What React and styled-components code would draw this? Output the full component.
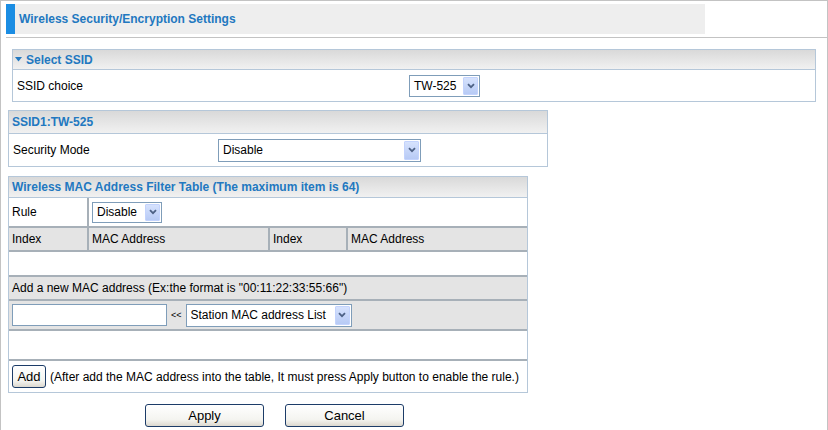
import React from "react";
import styled, { createGlobalStyle } from "styled-components";

const blue = "#2278c0";
const panelLine = "#b5c7d9";
const rowLine = "#a7b0b8";
const grayRow = "#e4e4e4";

const GlobalStyle = createGlobalStyle`
  body {
    margin: 0;
    background: #fff;
    font-family: "Liberation Sans", Arial, sans-serif;
    font-size: 12px;
    color: #000;
  }
`;

const Page = styled.div`
  width: 828px;
  min-height: 470px;
  box-sizing: border-box;
  border: 1px solid #c3c3c3;
  border-bottom: none;
`;

const TitleArea = styled.div`
  margin-left: 5px;
  padding: 3px 0 3px;
  border-bottom: 1px solid #c3c3c3;
`;

const TitleBox = styled.div`
  width: 686px;
  height: 30px;
  background: #eeeeee;
  border-left: 9px solid #1b8de3;
  padding-left: 4px;
  line-height: 30px;
  font-weight: bold;
  color: ${blue};
`;

const Content = styled.div`
  display: flex;
  flex-direction: column;
  align-items: flex-start;
`;

const Panel = styled.div`
  width: ${(p) => p.$w}px;
  margin: ${(p) => p.$top}px 0 0 ${(p) => p.$left}px;
  box-sizing: border-box;
  border: 1px solid ${panelLine};
`;

const PanelHead = styled.div`
  height: ${(p) => p.$h}px;
  display: flex;
  align-items: center;
  gap: 4px;
  padding-left: ${(p) => p.$pad}px;
  background: linear-gradient(#d9d9d9, #f1f1f1);
  border-bottom: 1px solid ${panelLine};
  font-weight: bold;
  color: ${blue};
`;

const FieldRow = styled.div`
  display: grid;
  grid-template-columns: ${(p) => p.$label}px 1fr;
  align-items: center;
  height: ${(p) => p.$h}px;
  background: #fff;
`;

const Cell = styled.div`
  height: 100%;
  display: flex;
  align-items: center;
  padding-left: ${(p) => p.$pad ?? 3}px;
  box-sizing: border-box;
  border-right: ${(p) => (p.$divider ? `2px solid ${rowLine}` : "none")};
  white-space: nowrap;
`;

const TableRow = styled.div`
  display: ${(p) => (p.$cols ? "grid" : "flex")};
  grid-template-columns: ${(p) => p.$cols || "none"};
  align-items: center;
  height: ${(p) => p.$h}px;
  padding-left: ${(p) => (p.$cols ? 0 : 3)}px;
  background: ${(p) => (p.$gray ? grayRow : "#fff")};
  border-top: ${(p) => (p.$first ? "none" : `2px solid ${rowLine}`)};
  white-space: nowrap;
`;

const ComboBox = styled.div`
  display: inline-flex;
  width: ${(p) => p.$w}px;
  height: ${(p) => p.$h}px;
  box-sizing: border-box;
  border: 1px solid #7f9db9;
  background: #fff;
  font-size: 12px;
`;

const ComboText = styled.span`
  flex: 1;
  display: flex;
  align-items: center;
  padding-left: 4px;
`;

const ComboArrow = styled.span`
  width: 15px;
  margin: 1px;
  box-sizing: border-box;
  display: flex;
  align-items: center;
  justify-content: center;
  border: 1px solid #c3d3fd;
  border-radius: 1px;
  background: linear-gradient(#d6e2fd, #b7caf5);
`;

const TextInput = styled.input`
  width: 155px;
  height: 22px;
  box-sizing: border-box;
  border: 1px solid #7f9db9;
  margin: 0;
  padding: 0 3px;
  font: 12px "Liberation Sans", Arial, sans-serif;
`;

const Arrows = styled.span`
  font-size: 9px;
  margin: 0 4px;
`;

const Button = styled.button`
  width: ${(p) => p.$w}px;
  height: 23px;
  padding: 0;
  margin: 0;
  box-sizing: border-box;
  border: 1px solid #1c3c68;
  border-radius: 3px;
  background: linear-gradient(#ffffff, #f4f4f0 70%, #dcd8cf);
  font: 13px "Liberation Sans", Arial, sans-serif;
  color: #000;
`;

const Note = styled.span`
  margin-left: 4px;
`;

const ButtonBar = styled.div`
  display: flex;
  gap: 21px;
  margin: 11px 0 0 144px;
`;

const Chevron = () => (
  <svg width="8" height="6" viewBox="0 0 8 6">
    <path d="M1 1.2 L4 4.2 L7 1.2" stroke="#4d6185" strokeWidth="1.8" fill="none" />
  </svg>
);

const Triangle = () => (
  <svg width="7" height="5" viewBox="0 0 7 5">
    <polygon points="0,0 7,0 3.5,4.5" fill={blue} />
  </svg>
);

const Select = ({ value, w, h = 22 }) => (
  <ComboBox $w={w} $h={h}>
    <ComboText>{value}</ComboText>
    <ComboArrow>
      <Chevron />
    </ComboArrow>
  </ComboBox>
);

const macCols = "80px 181px 78px 1fr";

export default function App() {
  return (
    <>
      <GlobalStyle />
      <Page>
        <TitleArea>
          <TitleBox>Wireless Security/Encryption Settings</TitleBox>
        </TitleArea>
        <Content>
          <Panel $w={804} $left={11} $top={11}>
            <PanelHead $h={19} $pad={2}>
              <Triangle />
              Select SSID
            </PanelHead>
            <FieldRow $label={392} $h={31}>
              <Cell $pad={4}>SSID choice</Cell>
              <Cell $pad={4}>
                <Select value="TW-525" w={71} />
              </Cell>
            </FieldRow>
          </Panel>

          <Panel $w={540} $left={7} $top={8}>
            <PanelHead $h={22} $pad={3}>SSID1:TW-525</PanelHead>
            <FieldRow $label={205} $h={32}>
              <Cell $pad={4}>Security Mode</Cell>
              <Cell $pad={4}>
                <Select value="Disable" w={203} h={23} />
              </Cell>
            </FieldRow>
          </Panel>

          <Panel $w={520} $left={7} $top={9}>
            <PanelHead $h={20} $pad={3}>
              Wireless MAC Address Filter Table (The maximum item is 64)
            </PanelHead>
            <TableRow $first $h={28} $cols="80px 1fr">
              <Cell $divider>Rule</Cell>
              <Cell>
                <Select value="Disable" w={70} h={21} />
              </Cell>
            </TableRow>
            <TableRow $gray $h={22} $cols={macCols}>
              <Cell $divider>Index</Cell>
              <Cell $divider>MAC Address</Cell>
              <Cell $divider>Index</Cell>
              <Cell>MAC Address</Cell>
            </TableRow>
            <TableRow $h={23} />
            <TableRow $gray $h={22}>
              Add a new MAC address (Ex:the format is "00:11:22:33:55:66")
            </TableRow>
            <TableRow $gray $h={28}>
              <TextInput type="text" />
              <Arrows>&lt;&lt;</Arrows>
              <Select value="Station MAC address List" w={166} h={23} />
            </TableRow>
            <TableRow $h={28} />
            <TableRow $h={31}>
              <Button $w={34}>Add</Button>
              <Note>
                (After add the MAC address into the table, It must press Apply button to enable the rule.)
              </Note>
            </TableRow>
          </Panel>

          <ButtonBar>
            <Button $w={119}>Apply</Button>
            <Button $w={119}>Cancel</Button>
          </ButtonBar>
        </Content>
      </Page>
    </>
  );
}
